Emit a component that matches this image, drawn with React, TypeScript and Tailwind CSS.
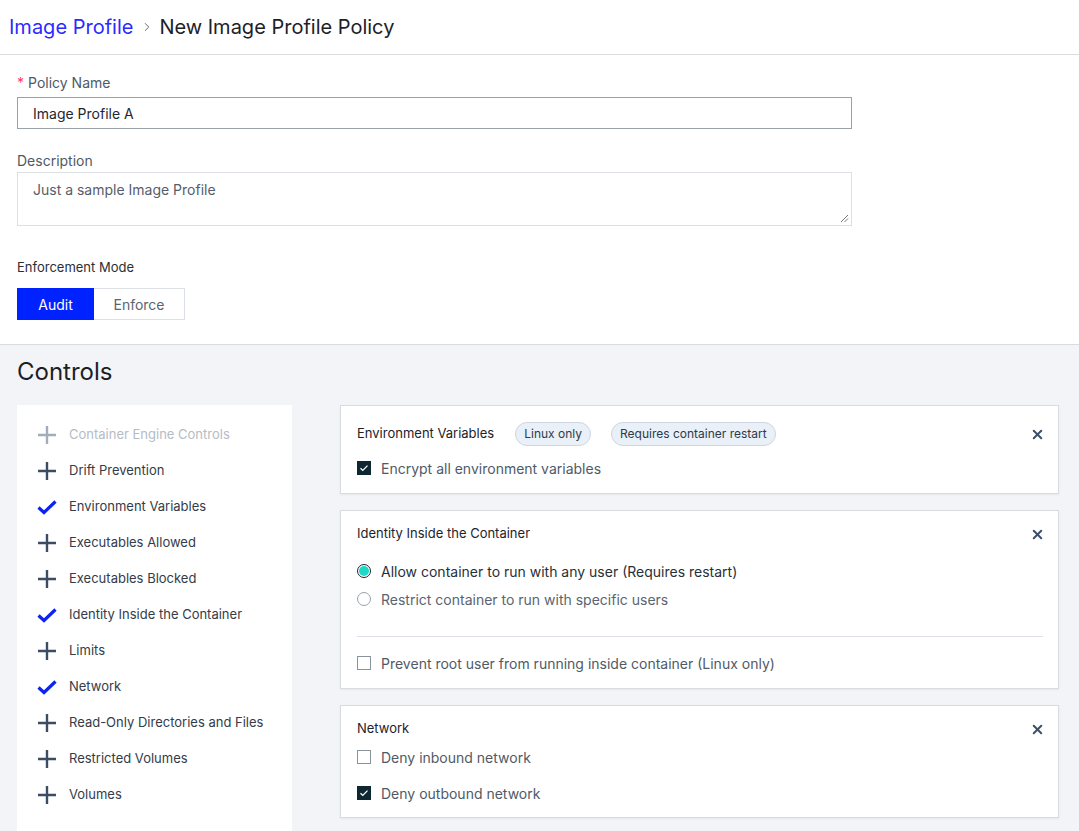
import { ChevronRight, X } from "lucide-react";

const controls = [
  { name: "Container Engine Controls", state: "disabled" },
  { name: "Drift Prevention", state: "add" },
  { name: "Environment Variables", state: "on" },
  { name: "Executables Allowed", state: "add" },
  { name: "Executables Blocked", state: "add" },
  { name: "Identity Inside the Container", state: "on" },
  { name: "Limits", state: "add" },
  { name: "Network", state: "on" },
  { name: "Read-Only Directories and Files", state: "add" },
  { name: "Restricted Volumes", state: "add" },
  { name: "Volumes", state: "add" },
];

function PlusIcon({ muted }: { muted?: boolean }) {
  return (
    <svg width="20" height="20" viewBox="0 0 20 20" className="shrink-0">
      <path
        d="M10 1v18M1 10h18"
        stroke={muted ? "#a3adba" : "#3c4d63"}
        strokeWidth="2.4"
        fill="none"
      />
    </svg>
  );
}

function CheckIcon() {
  return (
    <svg width="20" height="20" viewBox="0 0 20 20" className="shrink-0">
      <path
        d="M1.5 10.5l5.5 5 11.5-11"
        stroke="#0b24f2"
        strokeWidth="3.2"
        fill="none"
        strokeLinejoin="miter"
      />
    </svg>
  );
}

function Checkbox({ checked, label }: { checked?: boolean; label: string }) {
  return (
    <div className="flex h-5 items-center gap-[10px]">
      {checked ? (
        <span className="flex h-[14px] w-[14px] items-center justify-center bg-[#0e2730]">
          <svg width="10" height="10" viewBox="0 0 10 10">
            <path d="M1.5 5.2l2.3 2.2 4.7-4.8" stroke="white" strokeWidth="1.3" fill="none" />
          </svg>
        </span>
      ) : (
        <span className="h-[14px] w-[14px] border border-[#8a929c] bg-white" />
      )}
      <span className="text-[14px] text-[#505a66]">{label}</span>
    </div>
  );
}

function Radio({ checked, label }: { checked?: boolean; label: string }) {
  return (
    <div className="flex h-5 items-center gap-[10px]">
      {checked ? (
        <span className="flex h-[14px] w-[14px] items-center justify-center rounded-full border border-[#13262c] bg-white">
          <span className="h-[10px] w-[10px] rounded-full bg-[#1ed8c8]" />
        </span>
      ) : (
        <span className="h-[14px] w-[14px] rounded-full border border-[#9aa1aa] bg-white" />
      )}
      <span className={`text-[14px] ${checked ? "text-[#2a2f36]" : "text-[#5b6470]"}`}>{label}</span>
    </div>
  );
}

function Badge({ children }: { children: string }) {
  return (
    <span className="flex h-6 items-center rounded-full border border-[#cdd6e1] bg-[#e9f0f8] px-[8px] text-[12px] text-[#2f3a47]">
      {children}
    </span>
  );
}

function CardHeader({ title, badges }: { title: string; badges?: string[] }) {
  return (
    <div className="flex h-6 items-center justify-between">
      <div className="flex items-center gap-[21px]">
        <span className="text-[13px] text-[#1d232b]">{title}</span>
        {badges && (
          <div className="flex items-center gap-5">
            {badges.map((b) => (
              <Badge key={b}>{b}</Badge>
            ))}
          </div>
        )}
      </div>
      <X className="h-[15px] w-[15px] text-[#3c4f68]" strokeWidth={3.2} />
    </div>
  );
}

export default function App() {
  return (
    <div className="min-h-screen bg-[#f3f4f8] font-['Inter','Noto_Sans',sans-serif]">
      {/* Breadcrumb */}
      <div className="flex h-[55px] items-center border-b border-[#dcdcdc] bg-white pl-[9px]">
        <span className="text-[20px] text-[#2b2bff]">Image Profile</span>
        <ChevronRight className="ml-[7px] mr-[5px] h-[14px] w-[14px] text-[#555]" strokeWidth={1.5} />
        <span className="text-[20px] text-[#1c2129]">New Image Profile Policy</span>
      </div>

      {/* Form */}
      <div className="border-b border-[#d9dbe0] bg-white px-[17px] pb-[24px] pt-[17px]">
        <div className="flex h-5 items-center text-[14px] text-[#4f5965]">
          <span className="mr-[4px] text-[#ff3b6b]">*</span>Policy Name
        </div>
        <div className="mt-[5px] flex h-8 w-[835px] items-center border border-[#9ba1aa] pl-[15px] text-[14px] text-[#1f2630]">
          Image Profile A
        </div>

        <div className="mt-[21px] flex h-5 items-center text-[14px] text-[#4f5965]">Description</div>
        <div className="relative mt-[2px] h-[54px] w-[835px] border border-[#dcdfe5] pl-[15px] pt-[6px] text-[14px] text-[#555e6a]">
          Just a sample Image Profile
          <svg width="9" height="9" viewBox="0 0 9 9" className="absolute bottom-[2px] right-[2px]">
            <path d="M8 1L1 8M8 4.5L4.5 8" stroke="#777" strokeWidth="1" />
          </svg>
        </div>

        <div className="mt-[33px] flex h-[18px] items-center text-[13px] text-[#2a2f36]">Enforcement Mode</div>
        <div className="mt-[11px] flex h-8">
          <div className="flex w-[77px] items-center justify-center bg-[#0022ff] text-[14px] text-white">Audit</div>
          <div className="flex w-[91px] items-center justify-center border border-l-0 border-[#dcdfe5] text-[14px] text-[#5b6470]">
            Enforce
          </div>
        </div>
      </div>

      {/* Controls */}
      <div className="px-[17px] pt-[11px]">
        <h2 className="flex h-8 items-center text-[24px] text-[#1a1f26]">Controls</h2>
        <div className="mt-[17px] flex gap-[48px]">
          <div className="h-[440px] w-[275px] shrink-0 bg-white pl-[20px] pt-[12px]">
            {controls.map((c) => (
              <div key={c.name} className="flex h-9 items-center gap-[12px]">
                {c.state === "on" ? <CheckIcon /> : <PlusIcon muted={c.state === "disabled"} />}
                <span className={`text-[13px] ${c.state === "disabled" ? "text-[#b5bcc6]" : "text-[#333c48]"}`}>
                  {c.name}
                </span>
              </div>
            ))}
          </div>

          <div className="flex w-[719px] flex-col gap-4">
            <div className="border border-[#d9dbe0] bg-white pb-[15px] pl-[16px] pr-[13px] pt-[16px] shadow-[0_1px_2px_rgba(0,0,0,0.06)]">
              <CardHeader title="Environment Variables" badges={["Linux only", "Requires container restart"]} />
              <div className="mt-[12px]">
                <Checkbox checked label="Encrypt all environment variables" />
              </div>
            </div>

            <div className="border border-[#d9dbe0] bg-white pb-[15px] pl-[16px] pr-[13px] pt-[11px] shadow-[0_1px_2px_rgba(0,0,0,0.06)]">
              <CardHeader title="Identity Inside the Container" />
              <div className="mt-[15px] flex flex-col gap-2">
                <Radio checked label="Allow container to run with any user (Requires restart)" />
                <Radio label="Restrict container to run with specific users" />
              </div>
              <div className="mr-[2px] mt-[27px] border-t border-[#dcdfe5]" />
              <div className="mt-[16px]">
                <Checkbox label="Prevent root user from running inside container (Linux only)" />
              </div>
            </div>

            <div className="border border-[#d9dbe0] bg-white pb-[14px] pl-[16px] pr-[13px] pt-[11px] shadow-[0_1px_2px_rgba(0,0,0,0.06)]">
              <CardHeader title="Network" />
              <div className="mt-[6px] flex flex-col gap-4">
                <Checkbox label="Deny inbound network" />
                <Checkbox checked label="Deny outbound network" />
              </div>
            </div>
          </div>
        </div>
      </div>
    </div>
  );
}
